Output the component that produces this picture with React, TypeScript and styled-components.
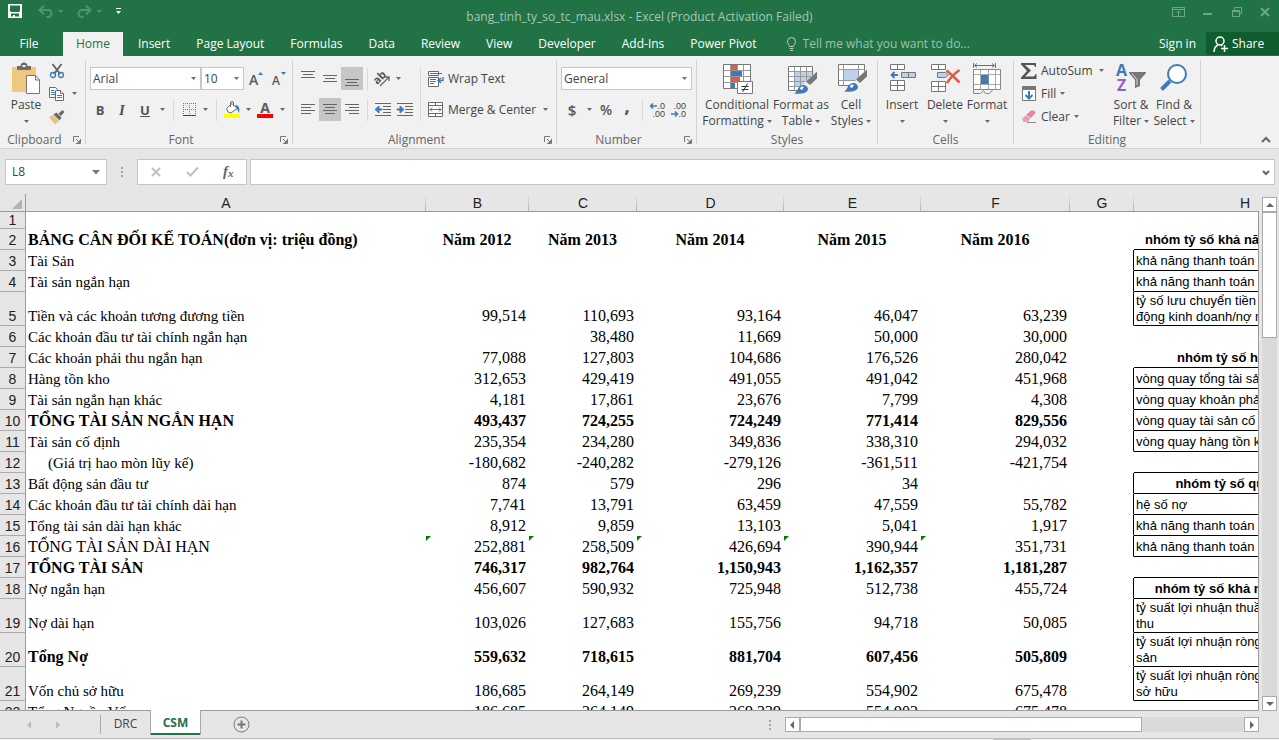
import React from 'react';
import styled, { createGlobalStyle, css } from 'styled-components';

const ui = `"Open Sans", "Noto Sans", sans-serif`;
const green = '#217346';
const line = '#ababab';
const chrome = '#e6e6e6';

const GlobalStyle = createGlobalStyle`
  *, *::before, *::after { box-sizing: border-box; }
  body { margin: 0; }
  button, input, select {
    margin: 0; padding: 0; border: 0; background: none; color: inherit;
    font: inherit; border-radius: 0; outline: 0; appearance: none;
  }
  svg { display: block; flex: none; overflow: visible; }
`;

const Page = styled.div`
  display: flex;
  flex-direction: column;
  height: 100vh;
  overflow: hidden;
  background: ${chrome};
  color: #444;
  font: 12px/16px ${ui};
`;

/* ---------- title bar ---------- */

const TitleBar = styled.header`
  display: grid;
  grid-template-columns: 1fr auto 1fr;
  align-items: center;
  height: 32px;
  background: ${green};
  color: #a6c8b5;
`;
const QuickAccess = styled.div`
  display: flex;
  align-items: center;
  height: 22px;
  padding-left: 4px;
  align-self: start;
`;
const WindowButtons = styled.div`
  display: flex;
  justify-content: flex-end;
  align-self: start;
  height: 24px;
`;
const Title = styled.h1`
  margin: 0;
  padding-top: 2px;
  font: 12px/16px ${ui};
`;
const BarButton = styled.button<{ $w: number }>`
  display: flex;
  align-items: center;
  justify-content: center;
  gap: 5px;
  width: ${p => p.$w}px;
  height: 100%;
`;

/* ---------- ribbon tabs ---------- */

const TabStrip = styled.nav`
  display: flex;
  height: 24px;
  background: ${green};
  color: #fff;
`;
const RibbonTab = styled.button<{ $active?: boolean; $file?: boolean }>`
  padding: 0 13px;
  white-space: nowrap;
  ${p => p.$file && css`width: 63px; padding: 0 5px 0 0;`}
  ${p => p.$active && css`background: #f1f1f1; color: ${green}; margin-right: 2px;`}
`;
const TellMe = styled.label`
  display: flex;
  flex: 1;
  align-items: center;
  gap: 6px;
  padding-left: 16px;
  color: #9cc3ad;
  input { flex: 1; min-width: 0; }
  input::placeholder { color: #9cc3ad; opacity: 1; }
`;
const SignIn = styled.button`
  padding: 0 10px;
`;
const ShareButton = styled.button`
  display: flex;
  align-items: center;
  gap: 4px;
  width: 73px;
  height: 23px;
  padding-left: 7px;
  background: #0f5c2f;
`;

/* ---------- ribbon ---------- */

const Ribbon = styled.div`
  display: flex;
  height: 93px;
  background: #f1f1f1;
  border-bottom: 1px solid #d2d2d2;
`;
const Group = styled.section<{ $w: number }>`
  display: flex;
  flex: none;
  flex-direction: column;
  width: ${p => p.$w}px;
`;
const GroupBody = styled.div<{ $left: number; $top: number }>`
  display: flex;
  flex: 1;
  align-items: flex-start;
  padding: ${p => p.$top}px 0 0 ${p => p.$left}px;
`;
const GroupFooter = styled.div`
  display: flex;
  height: 16px;
  color: #666;
`;
const GroupName = styled.h2`
  flex: 1;
  margin: 0;
  text-align: center;
  font: 12px/16px ${ui};
`;
const Launcher = styled.button`
  display: flex;
  align-items: center;
  width: 16px;
  padding-left: 4px;
`;
const GroupDivider = styled.div`
  width: 1px;
  margin: 4px 0;
  background: #d2d2d2;
`;
const Stack = styled.div<{ $gap?: number; $w?: number }>`
  display: flex;
  flex-direction: column;
  gap: ${p => p.$gap ?? 0}px;
  ${p => p.$w && css`width: ${p.$w}px;`}
`;
const ToolRow = styled.div<{ $h?: number }>`
  display: flex;
  align-items: center;
  height: ${p => p.$h ?? 23}px;
`;
const BigRow = styled.div`
  display: flex;
  padding-top: 3px;
`;
const Tool = styled.button<{ $w: number; $on?: boolean }>`
  display: flex;
  align-items: center;
  justify-content: center;
  width: ${p => p.$w}px;
  height: 100%;
  background: ${p => (p.$on ? '#c6c6c6' : 'transparent')};
`;
const Letter = styled.span<{ $size?: number; $light?: boolean; $serif?: boolean; $raised?: boolean }>`
  font-size: ${p => p.$size ?? 13}px;
  font-weight: ${p => (p.$light ? 600 : 700)};
  color: #555;
  ${p => p.$serif && css`font-family: "Liberation Serif", serif;`}
  ${p => p.$raised && css`padding-bottom: 9px;`}
`;
const ToolDivider = styled.div<{ $gap: number; $tall?: boolean }>`
  width: 1px;
  height: ${p => (p.$tall ? 54 : 22)}px;
  margin: 0 ${p => p.$gap}px;
  background: #d8d8d8;
`;
const TextTool = styled.button`
  display: flex;
  align-items: center;
  gap: 4px;
  height: 23px;
  padding-left: 3px;
  white-space: nowrap;
`;
const IconSlot = styled.span`
  display: flex;
  justify-content: center;
  width: 16px;
`;
const BigTool = styled.button<{ $w: number }>`
  display: flex;
  flex-direction: column;
  align-items: center;
  width: ${p => p.$w}px;
  white-space: nowrap;
  svg + span { margin-top: 3px; }
`;
const BigLine = styled.span`
  display: flex;
  align-items: center;
  justify-content: center;
  gap: 3px;
  height: 16px;
`;
const Dropdown = styled.span<{ $w: number }>`
  position: relative;
  display: block;
  width: ${p => p.$w}px;
  height: 23px;
  select {
    width: 100%;
    height: 100%;
    padding-left: 2px;
    border: 1px solid #c6c6c6;
    background: #fff;
  }
  svg {
    position: absolute;
    right: 5px;
    top: 10px;
    pointer-events: none;
  }
`;
const CollapseButton = styled.button`
  align-self: flex-end;
  margin-left: auto;
  padding: 4px 8px 4px 4px;
`;

/* ---------- formula bar ---------- */

const FormulaBar = styled.div`
  display: flex;
  height: 45px;
  padding: 10px 4px 9px 5px;
`;
const Field = styled.div<{ $w?: number }>`
  display: flex;
  align-items: center;
  ${p => (p.$w ? css`width: ${p.$w}px;` : css`flex: 1; margin-left: 3px;`)}
  background: #fff;
  border: 1px solid #c6c6c6;
  input { flex: 1; min-width: 0; padding-left: 6px; }
`;
const Grip = styled.span`
  display: flex;
  align-items: center;
  justify-content: center;
  width: 30px;
`;

/* ---------- worksheet ---------- */

const Workspace = styled.main`
  display: flex;
  flex: 1;
  min-height: 0;
`;
const Viewport = styled.div`
  position: relative;
  flex: 1;
  min-width: 0;
  overflow: hidden;
  &::after {
    content: '';
    position: absolute;
    inset: 17px 0 0 0;
    border: solid #9b9b9b;
    border-width: 0 1px 1px 0;
    pointer-events: none;
  }
`;
const Grid = styled.table`
  width: 1356px;
  table-layout: fixed;
  border-spacing: 0;
  background: #fff;
  color: #000;
  font: 16px/18px "Liberation Serif", "Times New Roman", serif;
  td, th { padding: 0; }
`;
const ColHead = styled.th`
  height: 18px;
  background: linear-gradient(#e6e6e6, #b0b0b0) right / 1px 100% no-repeat ${chrome};
  border-bottom: 1px solid #9b9b9b;
  color: #222;
  font: 14px/16px "Liberation Sans", Arial, sans-serif;
`;
const Corner = styled(ColHead)`
  border-right: 1px solid #9b9b9b;
  background: ${chrome};
  svg { margin: 2px 0 0 12px; }
`;
const RowHead = styled.th<{ $short: boolean }>`
  background: ${chrome};
  border-right: 1px solid #9b9b9b;
  border-bottom: 1px solid ${line};
  color: #222;
  vertical-align: bottom;
  font: 14px/${p => (p.$short ? 16 : 18)}px "Liberation Sans", Arial, sans-serif;
`;
const Row = styled.tr<{ $h: number; $bold?: boolean }>`
  height: ${p => p.$h}px;
  font-weight: ${p => (p.$bold ? 700 : 400)};
`;
const Cell = styled.td<{ $align?: string; $indent?: boolean; $flag?: boolean; $edge?: boolean; $small?: boolean }>`
  position: relative;
  && { padding: 0 2px 0 ${p => (p.$indent ? 22 : 2)}px; }
  border-bottom: 1px solid transparent;
  border-right: 1px solid ${p => (p.$edge ? '#000' : 'transparent')};
  text-align: ${p => p.$align ?? 'left'};
  vertical-align: bottom;
  white-space: nowrap;
  ${p => p.$small && css`font-size: 15px;`}
  ${p => p.$flag && css`
    &::before {
      content: '';
      position: absolute;
      left: 0;
      top: 0;
      border-top: 5px solid #008000;
      border-right: 5px solid transparent;
    }
  `}
`;
const RatioCell = styled.td<{ $head?: boolean; $ruled?: boolean; $double?: boolean }>`
  && { padding: 0 2px; }
  border-bottom: 1px solid ${p => (p.$ruled ? '#000' : 'transparent')};
  vertical-align: bottom;
  white-space: pre-line;
  font: 13px/${p => (p.$double ? 16 : 18)}px "Liberation Sans", Arial, sans-serif;
  ${p => p.$head && css`
    font-weight: 700;
    text-align: center;
  `}
`;

const VScroll = styled.div`
  display: flex;
  flex-direction: column;
  width: 20px;
  padding: 3px 2px 0 3px;
`;
const HScroll = styled.div`
  display: flex;
  width: 47%;
  height: 15px;
`;
const ScrollButton = styled.button`
  display: flex;
  flex: none;
  align-items: center;
  justify-content: center;
  width: 15px;
  height: 15px;
  border: 1px solid ${line};
  background: #fff;
`;
const Track = styled.div<{ $row?: boolean }>`
  display: flex;
  flex: 1;
  flex-direction: ${p => (p.$row ? 'row' : 'column')};
  background: #dadada;
`;
const Thumb = styled.div<{ $size: number }>`
  flex: 0 0 ${p => p.$size}%;
  border: 1px solid ${line};
  background: #fff;
`;

/* ---------- sheet tabs ---------- */

const SheetBar = styled.footer`
  display: flex;
  height: 27px;
`;
const SheetNav = styled.div`
  display: flex;
  width: 101px;
  height: 19px;
  margin-top: 4px;
  padding: 0 28px 0 14px;
  border-right: 1px solid ${line};
`;
const SheetTab = styled.button<{ $active?: boolean }>`
  height: 25px;
  width: 49px;
  color: #444;
  ${p => p.$active && css`
    position: relative;
    z-index: 1;
    width: 51px;
    margin-top: -1px;
    background: #fff;
    border: solid ${line};
    border-width: 0 1px;
    box-shadow: inset 0 -2px ${green};
    color: ${green};
    font-weight: 700;
  `}
`;
const AddSheet = styled.button`
  display: flex;
  align-items: center;
  height: 26px;
  margin-left: 32px;
`;
const SheetScroll = styled.div`
  display: flex;
  flex: 1;
  align-items: flex-start;
  justify-content: flex-end;
  padding: 6px 20px 0 0;
  ${Grip} { height: 15px; }
`;
const StatusEdge = styled.div`
  height: 2px;
  border-top: 1px solid #bdbdbd;
  background: linear-gradient(#c8c8c8, #c8c8c8) 80% 0 / 38px 1px no-repeat #f1f1f1;
`;

/* ---------- icons ---------- */

const blue = '#3f7ab8';

const Caret = ({ color = '#6a6a6a' }: { color?: string }) => (
  <svg width="5" height="3" viewBox="0 0 5 3"><path d="M0 0h5L2.5 3z" fill={color} /></svg>
);
const BigCaret = () => (
  <svg width="8" height="5" viewBox="0 0 8 5"><path d="M0 0h8L4 4.500z" fill="#777" /></svg>
);
const LaunchIcon = () => (
  <svg width="8" height="8" viewBox="0 0 8 8" fill="none" stroke="#777">
    <path d="M0.500 6V0.500H6M3 3l3 3" /><path d="M7.500 3v4.500H3" /><path d="M7 4v3H4z" fill="#777" stroke="none" />
  </svg>
);
const SaveIcon = () => (
  <svg width="14" height="14" viewBox="0 0 14 14" fill="#fff" fillRule="evenodd">
    <path d="M0 0h14v14H0zM2 1.500v5.500l1 1h8l1-1V1.500zM3 9.500v3h2V11h2v1.500h4V9.500z" />
  </svg>
);
const UndoIcon = ({ flip }: { flip?: boolean }) => (
  <svg width="15" height="13" viewBox="0 0 15 13" fill="none" stroke="#569272" strokeWidth="2">
    <g transform={flip ? 'translate(15 0) scale(-1 1)' : undefined}>
      <path d="M1.500 5H10a3.500 3.500 0 0 1 0 7H8.500" /><path d="M6 0.800L1.500 5L6 9.200" />
    </g>
  </svg>
);
const CustomizeIcon = () => (
  <svg width="5" height="6" viewBox="0 0 5 6" fill="#fff"><path d="M0 0h5v1H0zM0 3h5L2.500 6z" /></svg>
);
const PasteIcon = () => (
  <svg width="30" height="32" viewBox="0 0 30 32">
    <path d="M1 5h24v25H1z" fill="#edc87e" />
    <path d="M6 8V4h3.500a3.500 3.500 0 0 1 7 0H20v4z" fill="#6d6d6d" /><path d="M11.500 3h3v2h-3z" fill="#f1f1f1" />
    <path d="M15.500 13.500h9l4 4.500v13.500h-13z" fill="#fff" stroke="#777" /><path d="M24.500 13.500V18h4" fill="none" stroke="#777" />
  </svg>
);
const CutIcon = () => (
  <svg width="16" height="16" viewBox="0 0 16 16" fill="none">
    <path d="M3.500 1L11 11M12.500 1L5 11" stroke="#666" strokeWidth="2" />
    <circle cx="4" cy="12" r="2.500" stroke={blue} strokeWidth="1.300" /><circle cx="12" cy="12" r="2.500" stroke={blue} strokeWidth="1.300" />
  </svg>
);
const CopyIcon = () => (
  <svg width="16" height="16" viewBox="0 0 16 16" fill="#fff" stroke="#6a6a6a">
    <path d="M0.500 1.500h6l2 2v8h-8z" /><path d="M2 4.500h3M2 6.500h4M2 8.500h4" stroke={blue} />
    <path d="M6.500 4.500h5l3 3v7h-8z" /><path d="M11.500 4.500v3h3" /><path d="M8 9.500h5M8 11.500h5" stroke={blue} />
  </svg>
);
const PainterIcon = () => (
  <svg width="16" height="16" viewBox="0 0 16 16">
    <path d="M0 8l4-2 6 6-4 3.500z" fill="#edc07a" /><path d="M4.500 5.500l3-2 5 5-2 3z" fill="#6a6a6a" /><path d="M9.500 4.500l4-3.500 2 2-3.500 4z" fill="#6a6a6a" />
  </svg>
);
const FontSizeIcon = ({ down }: { down?: boolean }) => (
  <svg width="14" height="16" viewBox="0 0 14 16">
    <text x="0" y="14" fontFamily="Open Sans" fontSize={down ? 12 : 14} fontWeight="600" fill="#5a5a5a">A</text>
    <path d={down ? 'M9 1h5l-2.500 3z' : 'M9 4h5l-2.500-3z'} fill={blue} />
  </svg>
);
const BorderIcon = () => (
  <svg width="13" height="13" viewBox="0 0 13 13" stroke="#777" strokeDasharray="1 1" fill="none" shapeRendering="crispEdges">
    <path d="M0 0.500h13M0 6.500h13M0.500 0v13M6.500 0v13M12.500 0v13" /><path d="M0 12.500h13" stroke="#444" strokeDasharray="none" />
  </svg>
);
const FillColorIcon = () => (
  <svg width="16" height="17" viewBox="0 0 16 17">
    <path d="M2.500 7.500L8 2.500l5 5-6 4.500-3-1z" fill="#fff" stroke="#6a6a6a" /><path d="M6.500 6V2a1.500 1.500 0 0 1 3 0v3" fill="none" stroke="#6a6a6a" />
    <path d="M11 4c4 0 5 3 4 8l-2-4z" fill={blue} /><path d="M0 13h16v4H0z" fill="#ff0" />
  </svg>
);
const FontColorIcon = () => (
  <svg width="16" height="17" viewBox="0 0 16 17">
    <text x="8" y="12" textAnchor="middle" fontFamily="Open Sans" fontSize="14" fontWeight="700" fill="#5a5a5a">A</text>
    <path d="M0 13h16v4H0z" fill="#f00" />
  </svg>
);
const LinesIcon = ({ d, h = 12 }: { d: string; h?: number }) => (
  <svg width="14" height={h} viewBox={`0 0 14 ${h}`} stroke="#666" shapeRendering="crispEdges"><path d={d} /></svg>
);
const OrientIcon = () => (
  <svg width="18" height="16" viewBox="0 0 18 16" fill="none" stroke="#666">
    <text x="1" y="12" transform="rotate(-45 5 9)" fontFamily="Open Sans" fontSize="11" fontWeight="700" fill="#555" stroke="none">ab</text>
    <path d="M7 15L16 6M12 6h4v4" strokeWidth="1.300" />
  </svg>
);
const IndentIcon = ({ right }: { right?: boolean }) => (
  <svg width="16" height="13" viewBox="0 0 16 13">
    <path d="M0 0.500h16M8 3.500h8M8 6.500h8M8 9.500h8M0 12.500h16" stroke="#666" shapeRendering="crispEdges" />
    <path d={right ? 'M0 6h3V3l4 3.500L3 10V7H0z' : 'M7 6H4V3L0 6.500 4 10V7h3z'} fill={blue} stroke={blue} />
  </svg>
);
const WrapIcon = () => (
  <svg width="16" height="16" viewBox="0 0 16 16" fill="none" stroke="#6a6a6a">
    <path d="M10.500 4.500V0.500H0.500V4.500H10.500M0.500 15.500V6.500H10.500V15.500z" fill="#fff" />
    <path d="M2 2.500h12M2 8.500h6M2 10.500h6M2 12.500h4" stroke={blue} /><path d="M15 6v3.500h-4M13 7l-3 2.500L13 12" stroke={blue} strokeWidth="1.400" />
  </svg>
);
const MergeIcon = () => (
  <svg width="16" height="16" viewBox="0 0 16 16" fill="none" stroke="#6a6a6a">
    <path d="M0.500 0.500h14v14H0.500z" fill="#fff" /><path d="M0.500 3.500h14M0.500 11.500h14M7.500 0v3M7.500 12v3" />
    <path d="M2 7.500h11M4 5.500l-2 2 2 2M11 5.500l2 2-2 2" stroke={blue} />
  </svg>
);
const DecimalIcon = ({ less }: { less?: boolean }) => (
  <svg width="16" height="16" viewBox="0 0 16 16" fill="none">
    <g fontFamily="Liberation Sans" fontSize="9" fill="#444">
      <text x="15" y="7" textAnchor="end">{less ? '.00' : '.0'}</text><text x="15" y="15" textAnchor="end">{less ? '.0' : '.00'}</text>
    </g>
    <path d={less ? 'M0 12h6M4 9.500L6.500 12 4 14.500' : 'M7 4H1M3 1.500L0.500 4 3 6.500'} stroke={blue} strokeWidth="1.500" />
  </svg>
);
const CondIcon = () => (
  <svg width="32" height="32" viewBox="0 0 32 32">
    <path d="M2.500 2.500h27v24h-27z" fill="#fff" stroke="#777" />
    <path d="M9.500 3v23M16.500 3v23M22.500 3v23M3 8.500h26M3 14.500h26M3 20.500h26" stroke="#999" />
    <path d="M10 3h6v5h-6zM10 15h9v5h-9z" fill="#dd5f43" /><path d="M10 9h11v5H10zM10 21h4v5h-4z" fill={blue} />
    <path d="M16.500 19.500h15v12h-15z" fill="#fff" stroke="#777" />
    <path d="M20.500 24.500h7M20.500 27.500h7M26.500 21.500l-5 8.500" stroke="#333" fill="none" />
  </svg>
);
const TableStyleIcon = () => (
  <svg width="32" height="32" viewBox="0 0 32 32">
    <path d="M3.500 4.500h24v24h-24z" fill="#fff" stroke="#777" /><path d="M10 10h17v15H10z" fill="#bcd2ec" />
    <path d="M9.500 5v23M15.500 5v23M21.500 5v23M4 9.500h23M4 14.500h23M4 19.500h23M4 24.500h23" stroke="#999" />
    <path d="M12 32l8-12 12-11v23z" fill="#f1f1f1" /><path d="M32 9.500v7L25 23l-4-3.500z" fill="#777" />
    <path d="M9 31.500c4-1 3-8 9-8.500 3 0 5 2 5 4.500-1 4-8 5-14 4z" fill={blue} /><path d="M15 27c0-3 3-3 4-2l-2 3z" fill="#fff" />
  </svg>
);
const CellStyleIcon = () => (
  <svg width="32" height="32" viewBox="0 0 32 32">
    <path d="M3.500 2.500h26v21h-26z" fill="#fff" stroke="#777" /><path d="M3.500 7.500h26M3.500 18.500h26M8.500 2.500v21M23.500 2.500v21" stroke="#999" />
    <path d="M9 8h14v10H9z" fill="#bcd2ec" /><path d="M14 25l8-8 10-10v20z" fill="#f1f1f1" /><path d="M32 7.500v7L25 21l-4-3.500z" fill="#777" />
    <path d="M9 29.500c4-1 3-8 9-8.500 3 0 5 2 5 4.500-1 4-8 5-14 4z" fill={blue} /><path d="M15 25c0-3 3-3 4-2l-2 3z" fill="#fff" />
  </svg>
);
const InsertIcon = () => (
  <svg width="32" height="32" viewBox="0 0 32 32" fill="#fff" stroke="#777">
    <path d="M4.500 2.500h14v5h-14zM11.500 2.500v5M4.500 18.500h14v10h-14zM11.500 18.500v10M4.500 23.500h14" />
    <path d="M15.500 10.500h14v5h-14zM22.500 10.500v5" fill="#bcd2ec" /><path d="M12 13H6M8.500 10L5.500 13l3 3" stroke={blue} strokeWidth="1.800" fill="none" />
  </svg>
);
const DeleteIcon = () => (
  <svg width="32" height="32" viewBox="0 0 32 32" fill="#fff" stroke="#777">
    <path d="M2.500 2.500h14v5h-14zM9.500 2.500v5M2.500 19.500h14v10h-14zM9.500 19.500v10M2.500 24.500h14" />
    <path d="M8.500 10.500h8l3 2.500-3 2.500h-8z" fill="#bcd2ec" /><path d="M17.500 8.500C22 12 27 17 30.500 20.500M30.500 8C25 12 21 16 18 21" stroke="#dd5f43" strokeWidth="2.500" fill="none" />
  </svg>
);
const FormatIcon = () => (
  <svg width="32" height="32" viewBox="0 0 32 32" fill="none" stroke="#888">
    <path d="M2.500 7.500h27v20h-27z" fill="#fff" /><path d="M9.500 8v19M17.500 8v19M24.500 8v19M3 12.500h26M3 22.500h26" stroke="#aaa" /><path d="M10 13h7.500v9H10z" fill={blue} stroke="none" />
    <path d="M2.500 28v3.500h7l3-3 2 3h4l3-3.500" />
    <path d="M2.500 1v5M24.500 1v5M4 3.500h19M6 1.500l-2.500 2 2.500 2M21 1.500l2.500 2-2.500 2" stroke={blue} />
  </svg>
);
const SigmaIcon = () => (
  <svg width="16" height="16" viewBox="0 0 16 16"><path d="M0 0h15v4h-1c0-1.500-1-2-2.500-2H4l6 5.500L4 13.500h8c1.500 0 2-1 2.500-2.500h1V16H0v-1.500L6 8 0 1.500z" fill="#555" /></svg>
);
const FillIcon = () => (
  <svg width="14" height="15" viewBox="0 0 14 15"><path d="M0.500 0.500h13v14H0.500z" fill="#fff" stroke="#777" /><path d="M0 0h14v4H0z" fill="#777" /><path d="M7 5v7M3.500 9L7 12.500 10.500 9" stroke={blue} strokeWidth="2" fill="none" /></svg>
);
const EraserIcon = () => (
  <svg width="14" height="13" viewBox="0 0 14 13"><path d="M4 5L9 0.500h3l1.500 2.500L9 8z" fill="#e8879c" /><path d="M3.500 5.500L8.500 8.500 5.500 12h-4L0 9z" fill="#ee9dae" /><path d="M5 12.500h9" stroke="#888" /></svg>
);
const SortIcon = () => (
  <svg width="32" height="32" viewBox="0 0 32 32">
    <g fontFamily="Open Sans" fontSize="16" fontWeight="700"><text x="1" y="14" fill={blue}>A</text><text x="2" y="29" fill="#9363bb">Z</text></g>
    <path d="M14 10h17v1l-6 7v6l-5 2v-8l-6-7z" fill="#777" /><path d="M17 11.500l5 6V23" stroke="#ddd" fill="none" />
  </svg>
);
const FindIcon = () => (
  <svg width="32" height="32" viewBox="0 0 32 32" fill="none" stroke={blue}><circle cx="19" cy="12" r="9" fill="#fff" strokeWidth="2" /><path d="M12 19l-8.500 8.500" strokeWidth="4" /></svg>
);
const BulbIcon = () => (
  <svg width="11" height="14" viewBox="0 0 11 14" fill="none" stroke="#b3d0c0"><path d="M3.500 9.500C3.500 8 1.500 7 1.500 4.500a4 4 0 0 1 8 0C9.500 7 7.500 8 7.500 9.500zM3.500 11.500h4M4 13.500h3" /></svg>
);
const PersonIcon = () => (
  <svg width="15" height="16" viewBox="0 0 15 16" fill="none" stroke="#fff" strokeWidth="1.500"><circle cx="7" cy="5" r="4" /><path d="M1 16c0-4 2-6 4-7M8 9l1 1M8 12.500h7M11.500 9v7" /></svg>
);
const RibbonOptionsIcon = () => (
  <svg width="13" height="10" viewBox="0 0 13 10" fill="none" stroke="#6fa588"><path d="M0.500 0.500h12v9H0.500zM0 2.500h13M6.500 9V4M4.500 6l2-2 2 2" /></svg>
);
const Glyph = ({ d, w = 10, h = 10, color = '#6fa588', sw = 1 }: { d: string; w?: number; h?: number; color?: string; sw?: number }) => (
  <svg width={w} height={h} viewBox={`0 0 ${w} ${h}`} fill="none" stroke={color} strokeWidth={sw}><path d={d} /></svg>
);
const Arrow = ({ dir, color = '#666' }: { dir: 'up' | 'down' | 'left' | 'right'; color?: string }) => {
  const d = { up: 'M0 6h8L4 2z', down: 'M0 2h8L4 6z', left: 'M6 0v8L2 4z', right: 'M2 0v8L6 4z' }[dir];
  return <svg width="8" height="8" viewBox="0 0 8 8"><path d={d} fill={color} /></svg>;
};
const Dots = () => (
  <svg width="2" height="10" viewBox="0 0 2 10" fill="#a6a6a6"><path d="M0 0h2v2H0zM0 4h2v2H0zM0 8h2v2H0z" /></svg>
);
const PlusIcon = () => (
  <svg width="17" height="17" viewBox="0 0 17 17" fill="none" stroke="#777"><circle cx="8.500" cy="8.500" r="7.500" /><path d="M8.500 4.500v8M4.500 8.500h8" strokeWidth="2" /></svg>
);

/* ---------- data ---------- */

type SheetRow = {
  h?: number;
  label?: string;
  values?: string[];
  bold?: boolean;
  indent?: boolean;
  center?: boolean;
  flag?: boolean;
  ratio?: string;
  ratioHead?: boolean;
  ruled?: boolean;
  edge?: boolean;
};

const columns = [
  { name: 'A', w: 400 }, { name: 'B', w: 103 }, { name: 'C', w: 108 }, { name: 'D', w: 147 },
  { name: 'E', w: 137 }, { name: 'F', w: 149 }, { name: 'G', w: 64 }, { name: 'H', w: 222 },
];

const rows: SheetRow[] = [
  { h: 17 },
  { label: 'BẢNG CÂN ĐỐI KẾ TOÁN(đơn vị: triệu đồng)', values: ['Năm 2012', 'Năm 2013', 'Năm 2014', 'Năm 2015', 'Năm 2016'], bold: true, center: true, ratio: 'nhóm tỷ số khả năng thanh toán', ratioHead: true, ruled: true },
  { label: 'Tài Sản', ratio: 'khả năng thanh toán hiện hành', ruled: true, edge: true },
  { label: 'Tài sản ngắn hạn', ratio: 'khả năng thanh toán nhanh', ruled: true, edge: true },
  { h: 34, label: 'Tiền và các khoản tương đương tiền', values: ['99,514', '110,693', '93,164', '46,047', '63,239'], ratio: 'tỷ số lưu chuyển tiền từ hoạt\nđộng kinh doanh/nợ ngắn hạn', ruled: true, edge: true },
  { label: 'Các khoản đầu tư tài chính ngắn hạn', values: ['', '38,480', '11,669', '50,000', '30,000'] },
  { label: 'Các khoản phải thu ngắn hạn', values: ['77,088', '127,803', '104,686', '176,526', '280,042'], ratio: 'nhóm tỷ số hoạt động', ratioHead: true, ruled: true },
  { label: 'Hàng tồn kho', values: ['312,653', '429,419', '491,055', '491,042', '451,968'], ratio: 'vòng quay tổng tài sản', ruled: true, edge: true },
  { label: 'Tài sản ngắn hạn khác', values: ['4,181', '17,861', '23,676', '7,799', '4,308'], ratio: 'vòng quay khoản phải thu', ruled: true, edge: true },
  { label: 'TỔNG TÀI SẢN NGẮN HẠN', values: ['493,437', '724,255', '724,249', '771,414', '829,556'], bold: true, ratio: 'vòng quay tài sản cố định', ruled: true, edge: true },
  { label: 'Tài sản cố định', values: ['235,354', '234,280', '349,836', '338,310', '294,032'], ratio: 'vòng quay hàng tồn kho', ruled: true, edge: true },
  { label: '(Giá trị hao mòn lũy kế)', indent: true, values: ['-180,682', '-240,282', '-279,126', '-361,511', '-421,754'], ruled: true },
  { label: 'Bất động sản đầu tư', values: ['874', '579', '296', '34', ''], ratio: 'nhóm tỷ số quản lý nợ', ratioHead: true, ruled: true, edge: true },
  { label: 'Các khoản đầu tư tài chính dài hạn', values: ['7,741', '13,791', '63,459', '47,559', '55,782'], ratio: 'hệ số nợ', ruled: true, edge: true },
  { label: 'Tổng tài sản dài hạn khác', values: ['8,912', '9,859', '13,103', '5,041', '1,917'], ratio: 'khả năng thanh toán lãi vay', ruled: true, edge: true },
  { label: 'TỔNG TÀI SẢN DÀI HẠN', values: ['252,881', '258,509', '426,694', '390,944', '351,731'], flag: true, ratio: 'khả năng thanh toán nợ', ruled: true, edge: true },
  { label: 'TỔNG TÀI SẢN', values: ['746,317', '982,764', '1,150,943', '1,162,357', '1,181,287'], bold: true, ruled: true },
  { label: 'Nợ ngắn hạn', values: ['456,607', '590,932', '725,948', '512,738', '455,724'], ratio: 'nhóm tỷ số khả năng sinh lời', ratioHead: true, ruled: true, edge: true },
  { h: 34, label: 'Nợ dài hạn', values: ['103,026', '127,683', '155,756', '94,718', '50,085'], ratio: 'tỷ suất lợi nhuận thuần doanh\nthu', ruled: true, edge: true },
  { h: 34, label: 'Tổng Nợ', values: ['559,632', '718,615', '881,704', '607,456', '505,809'], bold: true, ratio: 'tỷ suất lợi nhuận ròng trên tài\nsản', ruled: true, edge: true },
  { h: 34, label: 'Vốn chủ sở hữu', values: ['186,685', '264,149', '269,239', '554,902', '675,478'], ratio: 'tỷ suất lợi nhuận ròng trên vốn\nsở hữu', ruled: true, edge: true },
  { label: 'Tổng Nguồn Vốn', values: ['186,685', '264,149', '269,239', '554,902', '675,478'] },
];

const tabs = ['Insert', 'Page Layout', 'Formulas', 'Data', 'Review', 'View', 'Developer', 'Add-Ins', 'Power Pivot'];

/* ---------- components ---------- */

type GroupProps = { name: string; w: number; left: number; top?: number; launcher?: boolean; children: React.ReactNode };

const RibbonGroup = ({ name, w, left, top = 11, launcher, children }: GroupProps) => (
  <>
    <Group $w={w} aria-label={name}>
      <GroupBody $left={left} $top={top}>{children}</GroupBody>
      <GroupFooter>
        <GroupName>{name}</GroupName>
        {launcher && <Launcher aria-label={`${name} settings`}><LaunchIcon /></Launcher>}
      </GroupFooter>
    </Group>
    <GroupDivider />
  </>
);

const More = ({ label }: { label: string }) => <Tool $w={12} aria-label={label}><Caret /></Tool>;

type BigProps = { w: number; icon: React.ReactNode; first: string; second?: string };

const Big = ({ w, icon, first, second }: BigProps) => (
  <BigTool $w={w}>
    {icon}
    <BigLine>{first}</BigLine>
    <BigLine>{second}<Caret /></BigLine>
  </BigTool>
);

const Picker = ({ w, label, value }: { w: number; label: string; value: string }) => (
  <Dropdown $w={w}>
    <select aria-label={label} defaultValue={value}><option>{value}</option></select>
    <Caret />
  </Dropdown>
);

const RibbonPanel = () => (
  <Ribbon>
    <RibbonGroup name="Clipboard" w={85} left={6} top={3} launcher>
      <BigRow><Big w={40} icon={<PasteIcon />} first="Paste" /></BigRow>
      <Stack $w={36}>
        <ToolRow><Tool $w={22} aria-label="Cut"><CutIcon /></Tool></ToolRow>
        <ToolRow><Tool $w={22} aria-label="Copy"><CopyIcon /></Tool><More label="Copy options" /></ToolRow>
        <ToolRow><Tool $w={22} aria-label="Format Painter"><PainterIcon /></Tool></ToolRow>
      </Stack>
    </RibbonGroup>

    <RibbonGroup name="Font" w={206} left={4} launcher>
      <Stack $gap={8}>
        <ToolRow>
          <Picker w={111} label="Font" value="Arial" />
          <Picker w={43} label="Font size" value="10" />
          <Tool $w={24} aria-label="Increase font size"><FontSizeIcon /></Tool>
          <Tool $w={22} aria-label="Decrease font size"><FontSizeIcon down /></Tool>
        </ToolRow>
        <ToolRow>
          <Tool $w={20}><Letter>B</Letter></Tool>
          <Tool $w={24}><Letter as="i" $serif $size={15}>I</Letter></Tool>
          <Tool $w={22}><Letter as="u">U</Letter></Tool>
          <More label="Underline options" />
          <ToolDivider $gap={5} />
          <Tool $w={20} aria-label="Borders"><BorderIcon /></Tool>
          <More label="Border options" />
          <ToolDivider $gap={5} />
          <Tool $w={20} aria-label="Fill colour"><FillColorIcon /></Tool>
          <More label="Fill colour options" />
          <Tool $w={22} aria-label="Font colour"><FontColorIcon /></Tool>
          <More label="Font colour options" />
        </ToolRow>
      </Stack>
    </RibbonGroup>

    <RibbonGroup name="Alignment" w={263} left={4} launcher>
      <Stack $gap={8}>
        <ToolRow>
          <Tool $w={22} aria-label="Top align"><LinesIcon h={15} d="M0 0.500h14M2 3.500h10M0 6.500h14" /></Tool>
          <Tool $w={22} aria-label="Middle align"><LinesIcon h={15} d="M0 4.500h14M2 7.500h10M0 10.500h14" /></Tool>
          <Tool $w={22} $on aria-label="Bottom align"><LinesIcon h={15} d="M0 8.500h14M2 11.500h10M0 14.500h14" /></Tool>
          <ToolDivider $gap={4} />
          <Tool $w={20} aria-label="Orientation"><OrientIcon /></Tool>
          <More label="Orientation options" />
        </ToolRow>
        <ToolRow>
          <Tool $w={22} aria-label="Align left"><LinesIcon d="M0 0.500h14M0 3.500h10M0 6.500h14M0 9.500h10" /></Tool>
          <Tool $w={22} $on aria-label="Center"><LinesIcon d="M0 0.500h14M2 3.500h10M0 6.500h14M2 9.500h10" /></Tool>
          <Tool $w={22} aria-label="Align right"><LinesIcon d="M0 0.500h14M4 3.500h10M0 6.500h14M4 9.500h10" /></Tool>
          <ToolDivider $gap={4} />
          <Tool $w={22} aria-label="Decrease indent"><IndentIcon /></Tool>
          <Tool $w={22} aria-label="Increase indent"><IndentIcon right /></Tool>
        </ToolRow>
      </Stack>
      <ToolDivider $gap={4} $tall />
      <Stack $gap={8}>
        <TextTool><WrapIcon />Wrap Text</TextTool>
        <ToolRow>
          <TextTool><MergeIcon />Merge &amp; Center</TextTool>
          <Tool $w={18} aria-label="Merge options"><Caret /></Tool>
        </ToolRow>
      </Stack>
    </RibbonGroup>

    <RibbonGroup name="Number" w={139} left={4} launcher>
      <Stack $gap={8}>
        <Picker w={131} label="Number format" value="General" />
        <ToolRow>
          <Tool $w={22}><Letter $size={15} $light>$</Letter></Tool>
          <More label="Currency options" />
          <Tool $w={22}><Letter $size={14} $light>%</Letter></Tool>
          <Tool $w={20}><Letter $size={20} $raised>,</Letter></Tool>
          <ToolDivider $gap={5} />
          <Tool $w={20} aria-label="Increase decimal"><DecimalIcon /></Tool>
          <Tool $w={22} aria-label="Decrease decimal"><DecimalIcon less /></Tool>
        </ToolRow>
      </Stack>
    </RibbonGroup>

    <RibbonGroup name="Styles" w={180} left={5} top={6}>
      <Big w={70} icon={<CondIcon />} first="Conditional" second="Formatting" />
      <Big w={58} icon={<TableStyleIcon />} first="Format as" second="Table" />
      <Big w={42} icon={<CellStyleIcon />} first="Cell" second="Styles" />
    </RibbonGroup>

    <RibbonGroup name="Cells" w={135} left={3} top={6}>
      <Big w={42} icon={<InsertIcon />} first="Insert" />
      <Big w={44} icon={<DeleteIcon />} first="Delete" />
      <Big w={40} icon={<FormatIcon />} first="Format" />
    </RibbonGroup>

    <RibbonGroup name="Editing" w={186} left={4} top={3}>
      <Stack $w={92}>
        <ToolRow>
          <TextTool><IconSlot><SigmaIcon /></IconSlot>AutoSum</TextTool>
          <Tool $w={20} aria-label="AutoSum options"><Caret /></Tool>
        </ToolRow>
        <TextTool><IconSlot><FillIcon /></IconSlot>Fill<Caret /></TextTool>
        <TextTool><IconSlot><EraserIcon /></IconSlot>Clear<Caret /></TextTool>
      </Stack>
      <BigRow>
        <Big w={42} icon={<SortIcon />} first="Sort &amp;" second="Filter" />
        <Big w={44} icon={<FindIcon />} first="Find &amp;" second="Select" />
      </BigRow>
    </RibbonGroup>
    <CollapseButton aria-label="Collapse ribbon"><Glyph d="M1 6l4-4 4 4" h={8} color="#666" sw={2} /></CollapseButton>
  </Ribbon>
);

const Worksheet = () => (
  <Grid>
    <colgroup>
      <col width={26} />
      {columns.map(c => <col key={c.name} width={c.w} />)}
    </colgroup>
    <thead>
      <tr>
        <Corner aria-label="Select all"><svg width="10" height="10" viewBox="0 0 10 10"><path d="M10 0v10H0z" fill="#b4b4b4" /></svg></Corner>
        {columns.map(c => <ColHead key={c.name} scope="col">{c.name}</ColHead>)}
      </tr>
    </thead>
    <tbody>
      {rows.map((r, i) => (
        <Row key={i} $h={r.h ?? 21} $bold={r.bold}>
          <RowHead scope="row" $short={r.h === 17}>{i + 1}</RowHead>
          <Cell $indent={r.indent} $small={!r.bold && !r.flag}>{r.label}</Cell>
          {[0, 1, 2, 3, 4].map(c => (
            <Cell key={c} $align={r.center ? 'center' : 'right'} $flag={r.flag}>{r.values?.[c]}</Cell>
          ))}
          <Cell $edge={r.edge} />
          <RatioCell $head={r.ratioHead} $ruled={r.ruled} $double={r.ratio?.includes('\n')}>{r.ratio}</RatioCell>
        </Row>
      ))}
    </tbody>
  </Grid>
);

export default function App() {
  return (
    <Page>
      <GlobalStyle />
      <TitleBar>
        <QuickAccess>
          <BarButton $w={22} aria-label="Save"><SaveIcon /></BarButton>
          <BarButton $w={48} aria-label="Undo"><UndoIcon /><Caret color="#569272" /></BarButton>
          <BarButton $w={31} aria-label="Redo"><UndoIcon flip /><Caret color="#569272" /></BarButton>
          <BarButton $w={26} aria-label="Customize Quick Access Toolbar"><CustomizeIcon /></BarButton>
        </QuickAccess>
        <Title>bang_tinh_ty_so_tc_mau.xlsx - Excel (Product Activation Failed)</Title>
        <WindowButtons>
          <BarButton $w={30} aria-label="Ribbon display options"><RibbonOptionsIcon /></BarButton>
          <BarButton $w={30} aria-label="Minimize"><Glyph d="M0 7h9" sw={2} /></BarButton>
          <BarButton $w={28} aria-label="Restore"><Glyph d="M0.500 3.500h7v6h-7zM0 4.500h7M2.500 3V0.500h7v6H8" /></BarButton>
          <BarButton $w={28} aria-label="Close"><Glyph d="M1 1l8 8M9 1L1 9" sw={2} /></BarButton>
        </WindowButtons>
      </TitleBar>

      <TabStrip>
        <RibbonTab $file>File</RibbonTab>
        <RibbonTab $active>Home</RibbonTab>
        {tabs.map(t => <RibbonTab key={t}>{t}</RibbonTab>)}
        <TellMe><BulbIcon /><input aria-label="Tell me" placeholder="Tell me what you want to do..." /></TellMe>
        <SignIn>Sign in</SignIn>
        <ShareButton><PersonIcon />Share</ShareButton>
      </TabStrip>

      <RibbonPanel />

      <FormulaBar>
        <Field $w={102}>
          <input aria-label="Name box" defaultValue="L8" />
          <BarButton $w={20} aria-label="Name list"><BigCaret /></BarButton>
        </Field>
        <Grip><Dots /></Grip>
        <Field $w={110}>
          <BarButton $w={36} aria-label="Cancel"><Glyph d="M1 1l8 8M9 1L1 9" color="#c0c0c0" sw={2} /></BarButton>
          <BarButton $w={36} aria-label="Enter"><Glyph d="M1 6l3.500 3.500L12 1.500" w={13} h={12} color="#c0c0c0" sw={2} /></BarButton>
          <BarButton $w={36} aria-label="Insert function">
            <svg width="14" height="16" viewBox="0 0 14 16" fontFamily="Liberation Serif" fontStyle="italic" fontWeight="700" fill="#666">
              <text x="2" y="12" fontSize="15">f</text><text x="7" y="13" fontSize="11">x</text>
            </svg>
          </BarButton>
        </Field>
        <Field>
          <input aria-label="Formula bar" />
          <BarButton $w={16} aria-label="Expand formula bar"><Glyph d="M1 2l3 3 3-3" w={8} h={7} color="#666" sw={2} /></BarButton>
        </Field>
      </FormulaBar>

      <Workspace>
        <Viewport><Worksheet /></Viewport>
        <VScroll>
          <ScrollButton aria-label="Scroll up"><Arrow dir="up" /></ScrollButton>
          <Track><Thumb $size={26} /></Track>
          <ScrollButton aria-label="Scroll down"><Arrow dir="down" /></ScrollButton>
        </VScroll>
      </Workspace>

      <SheetBar>
        <SheetNav>
          <BarButton $w={30} aria-label="Previous sheet"><Arrow dir="left" color="#bdbdbd" /></BarButton>
          <BarButton $w={28} aria-label="Next sheet"><Arrow dir="right" color="#bdbdbd" /></BarButton>
        </SheetNav>
        <SheetTab>DRC</SheetTab>
        <SheetTab $active>CSM</SheetTab>
        <AddSheet aria-label="New sheet"><PlusIcon /></AddSheet>
        <SheetScroll>
          <Grip><Dots /></Grip>
          <HScroll>
            <ScrollButton aria-label="Scroll left"><Arrow dir="left" /></ScrollButton>
            <Track $row><Thumb $size={77} /></Track>
            <ScrollButton aria-label="Scroll right"><Arrow dir="right" /></ScrollButton>
          </HScroll>
        </SheetScroll>
      </SheetBar>
      <StatusEdge />
    </Page>
  );
}
